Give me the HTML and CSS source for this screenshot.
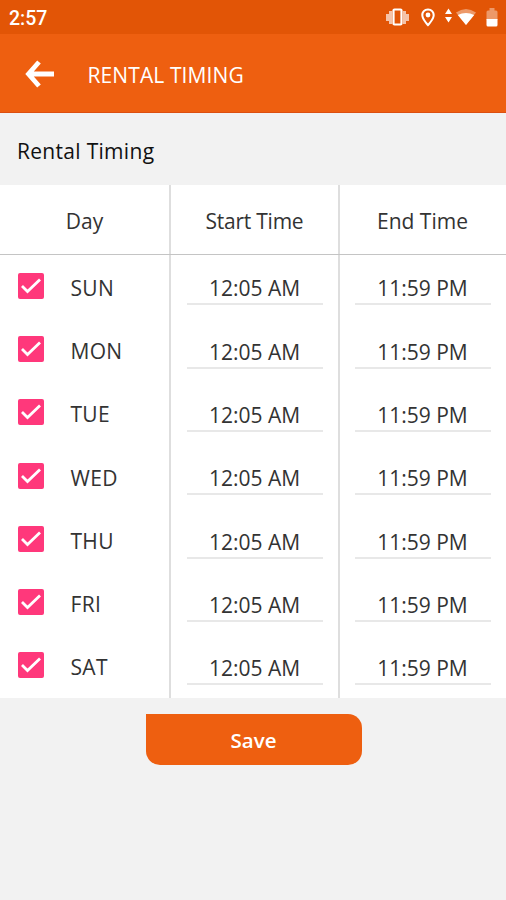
FILE: index.html
```html
<!DOCTYPE html>
<html lang="en">
<head>
<meta charset="UTF-8" />
<meta name="viewport" content="width=device-width, initial-scale=1" />
<title>Rental Timing</title>
<link rel="stylesheet" href="styles.css">
</head>
<body>
<div class="status-bar">
  <span class="clock">2:57</span>
  <svg class="status-icons" width="116" height="24" viewBox="0 0 116 24" fill="#fff">
    <!-- vibrate -->
    <path d="M0 9h3v7H0zM3 6h3v13H3zM17 6h3v13h-3zM20 9h3v7h-3z" opacity=".65" />
    <rect x="7.5" y="4.500" width="8" height="15" rx="1" fill="none" stroke="#fff" stroke-width="2.200" />
    <!-- location -->
    <path fill-rule="evenodd" d="M42 3.500c-4 0-6.700 3-6.700 6.700 0 4.600 6.700 11.300 6.700 11.300s6.700-6.700 6.700-11.300c0-3.700-2.700-6.700-6.700-6.700zm0 2c2.700 0 4.700 2 4.700 4.700 0 2.600-2.700 6-4.700 8.300-2-2.300-4.700-5.700-4.700-8.300 0-2.700 2-4.700 4.700-4.700z" />
    <circle cx="42" cy="10" r="2.400" />
    <!-- data + wifi -->
    <path d="M62.500 3.500l3.500 5.500h-7zM59 12h7l-3.500 5.500z" />
    <path d="M70 7.500Q80 .5 90 7.500L80 20z" opacity=".4" />
    <path d="M71.800 10Q80 6 88.200 10L80 20z" />
    <!-- battery -->
    <path d="M100.500 7q0-1.500 1.500-1.500h1.500V3h5v2.500h1.500q1.500 0 1.500 1.500v8h-11z" opacity=".4" />
    <path d="M100.500 14h11v6q0 1.500-1.500 1.500h-8q-1.500 0-1.500-1.500z" />
  </svg>
</div>
<header>
  <svg class="back" width="30" height="28" viewBox="0 0 30 28" fill="none" stroke="#fff" stroke-width="4.800">
    <path d="M29 14H4M14 2L3.500 14 14 26" />
  </svg>
  <h1>RENTAL TIMING</h1>
</header>
<h2>Rental Timing</h2>
<form id="timingForm">
  <div class="row head">
    <div class="cell">Day</div>
    <div class="cell start">Start Time</div>
    <div class="cell">End Time</div>
  </div>
  <div class="row">
    <div class="cell day"><svg class="check" viewBox="0 0 26 26"><path d="M4 13l5.500 5.500L22 6.500" /></svg>SUN</div>
    <div class="cell"><span class="time">12:05 AM</span></div>
    <div class="cell"><span class="time">11:59 PM</span></div>
  </div>
  <div class="row">
    <div class="cell day"><svg class="check" viewBox="0 0 26 26"><path d="M4 13l5.500 5.500L22 6.500" /></svg>MON</div>
    <div class="cell"><span class="time">12:05 AM</span></div>
    <div class="cell"><span class="time">11:59 PM</span></div>
  </div>
  <div class="row">
    <div class="cell day"><svg class="check" viewBox="0 0 26 26"><path d="M4 13l5.500 5.500L22 6.500" /></svg>TUE</div>
    <div class="cell"><span class="time">12:05 AM</span></div>
    <div class="cell"><span class="time">11:59 PM</span></div>
  </div>
  <div class="row">
    <div class="cell day"><svg class="check" viewBox="0 0 26 26"><path d="M4 13l5.500 5.500L22 6.500" /></svg>WED</div>
    <div class="cell"><span class="time">12:05 AM</span></div>
    <div class="cell"><span class="time">11:59 PM</span></div>
  </div>
  <div class="row">
    <div class="cell day"><svg class="check" viewBox="0 0 26 26"><path d="M4 13l5.500 5.500L22 6.500" /></svg>THU</div>
    <div class="cell"><span class="time">12:05 AM</span></div>
    <div class="cell"><span class="time">11:59 PM</span></div>
  </div>
  <div class="row">
    <div class="cell day"><svg class="check" viewBox="0 0 26 26"><path d="M4 13l5.500 5.500L22 6.500" /></svg>FRI</div>
    <div class="cell"><span class="time">12:05 AM</span></div>
    <div class="cell"><span class="time">11:59 PM</span></div>
  </div>
  <div class="row">
    <div class="cell day"><svg class="check" viewBox="0 0 26 26"><path d="M4 13l5.500 5.500L22 6.500" /></svg>SAT</div>
    <div class="cell"><span class="time">12:05 AM</span></div>
    <div class="cell"><span class="time">11:59 PM</span></div>
  </div>
</form>
<button type="submit" form="timingForm">Save</button>
</body>
</html>
```

FILE: styles.css
```css
* {
  box-sizing: border-box;
}
html, body {
  margin: 0; padding: 0;
}
body {
  min-height: 900px;
  font-family: "Open Sans", "Noto Sans", sans-serif;
  font-size: 21px;
  color: #333;
  background: #f2f2f2;
}
.status-bar {
  display: flex;
  justify-content: space-between;
  height: 34px;
  padding: 5px 4px 0 9px;
  background: #e25506;
}
.clock {
  font-family: Roboto, sans-serif;
  font-size: 19.5px;
  font-weight: 500;
  line-height: 27px;
  color: #fff;
}
header {
  display: flex;
  align-items: center;
  height: 79px;
  padding-left: 25px;
  background: #ee5f10;
  border-bottom: 1px solid #dc4f10;
}
.back {
  margin: 1px 32.5px 0 0;
}
h1 {
  margin: 3px 0 0;
  font-size: 21px;
  font-weight: 400;
  letter-spacing: 0.1px;
  color: #fff;
}
h2 {
  height: 72px;
  margin: 0;
  padding-left: 17px;
  font-size: 21px;
  font-weight: 400;
  line-height: 76px;
  letter-spacing: 0.3px;
  color: #111;
}
.row {
  display: grid;
  grid-template-columns: 171px 169px 166px;
  height: 63.3px;
  background: #fff;
}
.head {
  height: 70px;
  border-bottom: 1px solid #c4c4c4;
}
.cell {
  display: flex;
  align-items: center;
  justify-content: center;
  padding-top: 2px;
  border-right: 2px solid #dedede;
}
.cell:last-child {
  padding-right: 1px;
  border-right: none;
}
.start {
  letter-spacing: -0.25px;
}
.day {
  justify-content: flex-start;
  padding-left: 18px;
  letter-spacing: 0.3px;
}
.check {
  width: 26px;
  height: 26px;
  margin: -4px 26.5px 0 0;
  border-radius: 2px;
  background: #ff387b;
  fill: none;
  stroke: #fff;
  stroke-width: 2.8;
}
.time {
  width: 136px;
  height: 34px;
  margin-top: 1.5px;
  line-height: 34px;
  text-align: center;
  border-bottom: 2px solid #e8e8e8;
}
button {
  display: block;
  width: 216px;
  height: 51px;
  margin: 16px 0 0 145.5px;
  padding: 0;
  border: none;
  border-radius: 0 14px 14px 14px;
  background: #ee5f10;
  color: #fff;
  font-family: inherit;
  font-size: 20.5px;
  font-weight: 600;
  line-height: 28px;
}
```
